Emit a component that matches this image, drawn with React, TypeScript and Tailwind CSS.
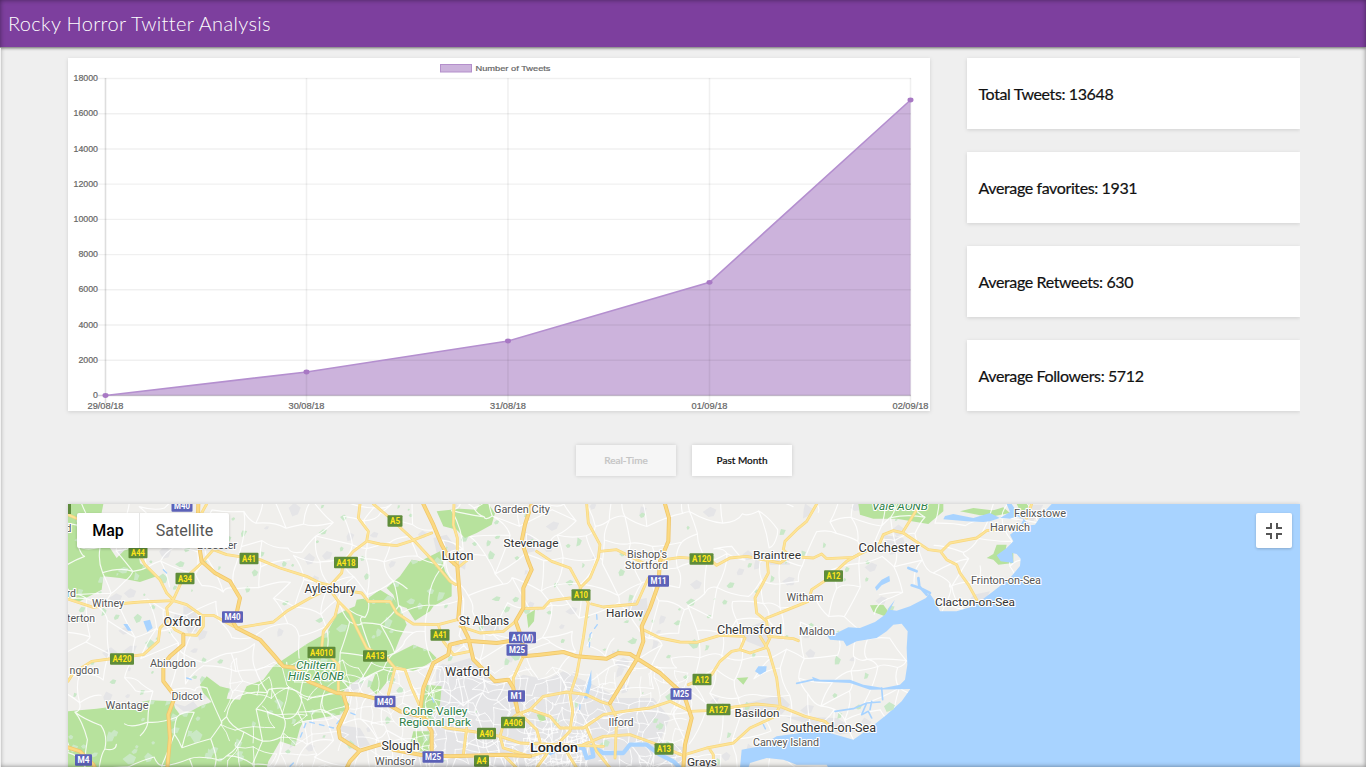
import React from "react";

const stats = ["Total Tweets: 13648", "Average favorites: 1931", "Average Retweets: 630", "Average Followers: 5712"];
const points: [string, number, number][] = [
  ["29/08/18", 105.5, 395.5],
  ["30/08/18", 306.5, 372],
  ["31/08/18", 508, 341],
  ["01/09/18", 709.5, 282.3],
  ["02/09/18", 910.5, 100],
];
const ticks = [18000, 16000, 14000, 12000, 10000, 8000, 6000, 4000, 2000, 0];

function Chart() {
  const line = points.map(([, x, y]) => `${x},${y}`).join(" ");
  return (
    <svg viewBox="68 58 862 353" className="block h-full w-full" fontFamily="'Liberation Sans', Arial, sans-serif" fontSize="8.8">
      <rect x="440.5" y="64.5" width="31" height="7.5" fill="#ccb3dc" stroke="#b48fcb" />
      <text x="475.5" y="70.7" textLength="75" lengthAdjust="spacingAndGlyphs" fontSize="8" fill="#666" stroke="#666" strokeWidth=".2">Number of Tweets</text>
      <polygon points={`105.5,395.5 ${line} 910.5,395.5`} fill="#ccb3dc" />
      {ticks.map((t, i) => {
        const y = 78.5 + i * 35.22;
        return (
          <g key={t}>
            <line x1="98" x2="911" y1={y} y2={y} stroke="#000" strokeOpacity={i === 9 ? 0.17 : 0.06} strokeWidth="1.4" />
            <text x="98" y={y + 2.6} textAnchor="end" fill="#666" stroke="#666" strokeWidth=".2">{t}</text>
          </g>
        );
      })}
      {points.map(([d, x], i) => (
        <g key={d}>
          <line x1={x} x2={x} y1="78" y2="403" stroke="#000" strokeOpacity={i === 0 ? 0.13 : 0.06} strokeWidth="1.6" />
          <text x={x} y="408.5" textAnchor="middle" textLength="36" lengthAdjust="spacingAndGlyphs" fontSize="8.4" fill="#666" stroke="#666" strokeWidth=".2">{d}</text>
        </g>
      ))}
      <polyline points={line} fill="none" stroke="#b48fcf" strokeWidth="1.6" />
      {points.map(([d, x, y]) => <ellipse key={d} cx={x} cy={y} rx="3" ry="2.4" fill="#a878c4" />)}
    </svg>
  );
}

// Deterministic mesh of local roads, as a jittered grid.
function mesh(x0: number, y0: number, x1: number, y1: number, step: number, keep: number, first: number) {
  let s = first;
  const rnd = () => {
    s = (s * 1103515245 + 12345) % 2147483648;
    return s / 2147483648;
  };
  const cols = Math.ceil((x1 - x0) / step) + 1;
  const rows = Math.ceil((y1 - y0) / step) + 1;
  const p: [number, number][][] = [];
  for (let r = 0; r < rows; r++) {
    p.push([]);
    for (let c = 0; c < cols; c++) p[r].push([x0 + (c + (rnd() - 0.5) * 0.95) * step, y0 + (r + (rnd() - 0.5) * 0.95) * step]);
  }
  let d = "";
  const edge = (a: [number, number], b: [number, number]) => {
    if (rnd() > keep) return;
    const mx = (a[0] + b[0]) / 2 + (rnd() - 0.5) * step * 0.5;
    const my = (a[1] + b[1]) / 2 + (rnd() - 0.5) * step * 0.5;
    d += `M${a[0].toFixed(1)} ${a[1].toFixed(1)}Q${mx.toFixed(1)} ${my.toFixed(1)} ${b[0].toFixed(1)} ${b[1].toFixed(1)}`;
  };
  for (let r = 0; r < rows; r++)
    for (let c = 0; c < cols; c++) {
      if (c + 1 < cols) edge(p[r][c], p[r][c + 1]);
      if (r + 1 < rows) edge(p[r][c], p[r + 1][c]);
    }
  return d;
}

function patches(n: number, x0: number, y0: number, w: number, h: number, size: number, first: number) {
  let s = first;
  const rnd = () => {
    s = (s * 1103515245 + 12345) % 2147483648;
    return s / 2147483648;
  };
  let d = "";
  for (let i = 0; i < n; i++) {
    const x = x0 + rnd() * w;
    const y = y0 + rnd() * h;
    const k = size * (0.4 + rnd());
    d += `M${x.toFixed(1)} ${y.toFixed(1)}l${(k * rnd()).toFixed(1)} ${(-k * 0.6).toFixed(1)} ${(k * 0.7).toFixed(1)} ${(k * rnd() * 0.6).toFixed(1)} ${(-k * 0.3).toFixed(1)} ${(k * 0.7).toFixed(1)} ${(-k * 0.6).toFixed(1)} ${(k * 0.3 * rnd()).toFixed(1)}Z`;
  }
  return d;
}

const motorways = [
  "M415 18L412 110 425 190 465 225 510 250 540 300 530 345 515 365 530 390 600 425 640 470 670 505 710 510 745 550 830 585 900 590 960 605 1020 640 1080 655",
  "M24 748L60 760 100 800 105 810",
  "M370 410L370 440 330 475 310 500 310 550 345 595 325 650 330 720 322 810",
  "M850 590L862 630 835 690 840 720 900 758 870 790 860 810M900 758L960 740 1000 755 1080 770 1170 775 1330 770 1410 775",
  "M1090 18L1120 80 1145 140 1170 185 1192 205 1200 300 1195 360 1225 420 1240 485 1305 550 1345 545 1360 570 1373 640",
  "M1415 18L1395 80 1385 130 1405 190 1415 215 1390 270 1390 330 1367 370 1385 420 1390 460",
  "M1115 770L1115 700 1080 640 1090 570 1120 495 1165 470 1170 440 1220 428 1310 435 1380 425M1390 475L1440 470 1510 462 1550 475 1640 482 1675 465 1710 468 1800 525 1860 580 1875 600 1895 660 1875 740 1870 810",
  "M1815 18L1827 60 1825 130 1800 190 1795 260 1770 330 1745 385 1750 430 1730 485 1690 550 1650 615",
];

const aRoads = [
  "M24 50L80 75 120 100M24 303L100 328 170 318 240 312 340 308M235 165L255 200 300 245 320 285 340 305 365 250 425 195 460 155 500 170 600 185 660 210 740 235 780 255 810 262M425 45L440 18",
  "M530 390L640 372 680 340 750 300 800 275 815 258 845 225 850 195 880 160 920 130 925 100 895 60 900 18M925 130L960 138 1010 143 1050 130 1115 105",
  "M810 275L835 310 870 345 890 390 920 450 980 480 1005 510 985 590M835 315L825 355 790 400 785 450 835 500 835 580M840 275L905 285 925 310 990 310 1010 345 1060 378 1135 380 1192 365",
  "M340 308L320 330 325 365 345 395 375 410 410 412 430 385 430 355 380 320 340 308M430 352L460 352 520 385",
  "M24 550L40 525 95 490 170 480 250 470 295 430 300 390 325 365",
  "M940 18L990 60 1060 125 1120 190 1170 250 1188 260M1182 18L1180 80 1192 120 1192 205",
  "M1580 18L1585 75 1620 140 1615 180 1590 240 1560 270 1585 315 1570 420 1550 530 1530 590 1538 640 1530 700 1490 740M1430 160L1475 190 1530 210 1560 265M1620 160L1670 155 1710 175 1760 200",
  "M1395 332L1450 330 1470 308 1530 300M1595 318L1630 327 1730 318 1765 240M1750 395L1800 420 1860 432 1910 433 1980 412 2050 415M1800 187L1860 178 1950 185 1970 202 2010 180 2060 175 2160 195 2190 175 2260 180 2285 168 2300 182 2380 178 2420 158",
  "M1135 380L1150 430 1180 470 1230 460M1005 510L1035 515 1055 570 1080 625M1200 385L1260 405 1330 400 1367 370M1195 260L1192 210 1230 180",
  "M1080 655L1160 690 1270 705 1320 715 1380 735 1490 740 1630 745M1390 475L1360 540 1360 600 1373 640M1220 690L1210 770M1320 715L1330 680 1370 650 1410 635 1450 595 1520 582 1580 590 1620 610 1650 620 1670 660 1665 780",
  "M1373 640L1430 695 1440 730M1410 635L1470 655 1500 690 1570 690 1630 650 1690 640 1770 630 1830 610 1890 640 1940 638 2090 618 2160 625 2235 655 2295 670 2310 685M1570 740L1630 715 1710 710 1780 735 1875 775M1580 690L1610 760 1650 810",
  "M1330 770L1370 810M1480 740L1430 810M1510 745L1550 810M1410 775L1460 760 1490 740M1320 715L1330 750 1410 775",
  "M1885 560L1955 530 1980 490 2015 460 2040 455 2070 465 2115 450 2130 420M2040 455L2055 420M2120 360L2170 340 2245 310 2255 275 2300 245 2360 190 2420 155 2455 145 2470 110 2500 98 2530 105 2605 155 2645 160 2670 135 2750 120 2780 98 2840 90M2530 100L2570 35M2645 165L2660 185 2690 200 2700 225 2725 260 2750 305",
  "M2270 18L2240 70 2210 95 2175 130 2170 155 2190 175M2122 190L2125 225 2085 300 2090 345 2120 370 2125 415 2200 422 2215 428M2100 415L2125 455 2150 540 2160 620M1875 770L1940 750 2020 735 2070 690 2140 658 2160 625M1950 755L1960 770 1960 810M2915 18L2900 60",
];

const greens = [
  "M24 18H130L120 70 150 150 170 180 200 150 235 165 240 195 290 235 240 252 180 240 130 235 125 275 55 312 24 305Z",
  "M24 640L110 632 200 620 270 607 340 610 345 630 360 650 395 638 420 625 455 612 430 585 420 560 440 535 480 565 508 572 500 602 540 605 560 565 610 545 640 505 745 435 800 405 830 350 850 340 885 325 890 305 925 300 960 275 1000 300 1020 330 1040 380 1020 420 1000 470 1060 440 1110 460 1130 480 1100 500 1060 520 1010 505 990 540 950 590 930 570 945 530 900 540 870 560 840 590 870 620 840 650 780 660 730 670 720 690 705 745 660 730 640 765 625 790 620 810H24Z",
  "M980 270L1020 235 1055 185 1080 190 1140 160 1155 220 1175 250 1175 295 1120 325 1110 340 1065 368 1040 330 1010 320 1000 290Z",
  "M1130 40L1200 32 1250 35 1260 18H1285L1305 45 1295 80 1250 105 1215 120 1190 95 1150 85Z",
  "M1100 560L1145 565 1140 620 1110 660 1075 650ZM1060 700L1110 700 1115 760 1070 760 1050 740Z",
  "M2395 18H2650L2650 40 2605 78 2510 62 2440 62 2400 50ZM2700 40L2740 30 2820 40 2820 50 2760 52Z",
  "M2430 322L2470 320 2488 345 2475 355 2440 342ZM2780 180L2800 168 2810 140 2840 140 2835 165 2860 165 2860 195 2815 200 2800 185ZM2790 40L2830 28 2850 45 2800 55ZM2870 18H2908L2900 35 2880 38Z",
  "M1430 650L1450 645 1458 665 1440 672ZM1400 350L1425 335 1422 370 1405 390ZM2030 540L2065 538 2050 560Z",
];

const urban = [
  "M370 325L400 330 420 370 410 400 385 405 370 375ZM345 345L370 350 365 385 340 370ZM450 595L500 590 495 655 465 655ZM340 615L375 625 400 610 420 635 370 640Z",
  "M1120 120L1160 110 1190 150 1220 180 1215 215 1180 195 1130 165ZM1395 100L1420 120 1425 160 1400 165ZM1270 385L1310 370 1320 400 1280 400ZM1705 310L1760 300 1765 350 1705 355ZM840 520L930 520 900 570 860 585ZM830 680L900 690 930 740 880 755 840 725Z",
  "M1130 510L1230 480 1330 560 1390 530 1460 545 1510 520 1600 560 1680 600 1780 600 1830 660 1800 730 1880 750 1880 810H1060L1100 700 1120 640Z",
  "M2040 400L2110 370 2140 400 2110 450 2060 430ZM2040 620L2160 590 2190 620 2160 655 2060 655ZM2170 655L2330 660 2400 700 2340 710 2250 680ZM2470 110L2530 120 2540 160 2490 170ZM2110 170L2180 165 2190 200 2130 200ZM2740 290L2790 280 2770 320 2710 330ZM2870 70L2920 20H2950L2920 70Z",
];

const sea =
  "M2975 18L2945 50 2925 80 2910 82 2890 62 2870 55 2850 62 2820 60 2790 70 2770 72 2720 70 2650 64 2655 54 2680 48 2740 60 2790 45 2820 60 2850 42 2840 18H2855L2875 48 2890 65 2878 88 2850 110 2860 130 2840 150 2810 172 2822 190 2860 195 2857 165 2870 168 2882 182 2880 204 2850 240 2800 280 2740 325 2690 340 2640 340 2622 305 2608 285 2598 300 2550 325 2510 338 2490 335 2505 305 2490 325 2475 350 2445 372 2400 390 2365 388 2330 405 2300 410 2310 425 2350 428 2360 445 2390 430 2450 420 2480 400 2500 380 2525 377 2543 400 2540 450 2542 500 2535 545 2520 560 2470 570 2410 560 2370 545 2280 545 2256 536 2262 550 2370 555 2430 575 2551 573 2525 610 2480 650 2430 690 2380 725 2310 705 2260 700 2150 715 2100 745 2045 755 2040 810H2065L2070 795 2120 780 2170 785 2210 800 2300 800 2305 810H3730V18Z";

type Label = [string, number, number, number, number, string?];
const dark = "#333";
const town = "#555";
const park = "#2f8148";
const labels: Label[] = [
  ["Garden City", 522, 513, 56, 10.5, town], ["Stevenage", 531, 547, 55, 11.5, dark], ["Luton", 457.5, 560, 32, 12, dark],
  ["Bishop's", 647, 558, 40, 10.5, town], ["Stortford", 646.5, 568.5, 43, 10.5, town], ["Braintree", 777, 559, 48, 11.5, dark],
  ["Colchester", 889, 551.5, 61, 12, dark], ["Felixstowe", 1040, 516.5, 52, 10.5, town], ["Harwich", 1010, 530.5, 40, 10.5, town],
  ["Frinton-on-Sea", 1006, 584, 70, 10.5, town], ["Clacton-on-Sea", 975, 605.5, 80, 11.5, dark], ["Witham", 805, 601, 37, 10.5, town],
  ["Chelmsford", 749.5, 634, 65, 12.5, dark], ["Maldon", 817, 635, 36, 10.5, town], ["Harlow", 624.5, 617, 37, 11.5, dark],
  ["St Albans", 484, 625, 50, 12, dark], ["Watford", 467.5, 675.5, 45, 12.5, dark], ["Aylesbury", 330, 592.5, 51, 12, dark],
  ["Oxford", 182.5, 625.5, 38, 12.5, dark], ["Witney", 108, 607, 32, 10.5, town], ["Abingdon", 173, 667, 46, 10.5, town],
  ["Didcot", 187, 699.5, 31, 10.5, town], ["Wantage", 127, 709, 43, 10.5, town], ["Bicester", 217, 548.5, 40, 10.5, town],
  ["Ilford", 621, 725.5, 25, 10.5, town], ["Basildon", 757, 716.5, 45, 11.5, dark], ["Southend-on-Sea", 828.5, 732, 95, 12, dark],
  ["Canvey Island", 786, 746, 66, 10.5, town], ["Grays", 702, 766, 30, 11, dark], ["Slough", 400.5, 750, 38, 12, dark],
  ["Windsor", 395, 764.5, 40, 10.5, town], ["Colne Valley", 435, 714.5, 65, 11, park], ["Regional Park", 435, 725.5, 72, 11, park],
];

type Shield = [string, number, number, number];
const shields: Shield[] = [
  ["M40", 182, 506, 21], ["A5", 395, 521, 15], ["A44", 138, 552.5, 19], ["A41", 249, 558.5, 19], ["A418", 346, 562.5, 24],
  ["A34", 185, 578.5, 19], ["M40", 232.5, 617, 21], ["A10", 581, 595, 19], ["M11", 658.5, 581, 21], ["A120", 701.5, 559, 24],
  ["A12", 833.5, 576, 19], ["A41", 440, 635, 19], ["A1(M)", 522.5, 637.5, 27], ["M25", 517, 650, 21], ["A413", 375, 656, 24],
  ["A4010", 321.5, 652.5, 28], ["A420", 122, 659, 24], ["M40", 385, 701.5, 21], ["M1", 516.5, 696, 17], ["A406", 513, 722.5, 24],
  ["A40", 486.5, 733.5, 19], ["M25", 433, 757, 21], ["A4", 481.5, 761, 15], ["A13", 664, 749, 19], ["M25", 681, 694, 21],
  ["A12", 702, 679.5, 19], ["A127", 718.5, 709.5, 24], ["M4", 83.5, 760, 17],
];

function MapCanvas() {
  return (
    <svg viewBox="68 504 1232 263" className="block h-full w-full" fontFamily="Roboto, sans-serif">
      <defs>
        <clipPath id="woods">{greens.map((d, i) => <path key={i} d={d} />)}</clipPath>
      </defs>
      <rect x="68" y="504" width="1232" height="263" fill="#f0efec" />
      <g transform="translate(60 498) scale(.333333)" fill="none" strokeLinejoin="round" strokeLinecap="round">
        <g fill="#e4e4e6">{urban.map((d, i) => <path key={i} d={d} />)}</g>
        <path d={patches(110, 24, 20, 2500, 780, 22, 91)} fill="#e5e5e7" />
        <path d={patches(190, 24, 20, 2500, 780, 15, 7)} fill="#c9e8c8" />
        <g fill="#b7e29d">{greens.map((d, i) => <path key={i} d={d} />)}</g>
        <path d={patches(230, 24, 20, 1150, 780, 20, 33)} fill="#cae8c5" clipPath="url(#woods)" />
        <path d={mesh(0, 0, 2900, 810, 66, 0.72, 17)} stroke="#fff" strokeOpacity=".85" strokeWidth="3.5" />
        <path d={mesh(1100, 520, 1860, 810, 30, 0.7, 5)} stroke="#fff" strokeOpacity=".8" strokeWidth="3" />
        <path d={mesh(1400, 690, 1580, 810, 15, 0.8, 50)} stroke="#fff" strokeWidth="2.5" />
        <path d={mesh(500, 500, 1080, 810, 44, 0.7, 23)} stroke="#fff" strokeOpacity=".8" strokeWidth="3" />
        <g fill="#a8d3ff">
          <path d={sea} />
          <path d="M2445 268L2465 245 2488 233 2490 250 2465 262 2450 278ZM2085 520L2095 505 2120 505 2118 520 2100 530ZM1594 515L1585 550 1572 600 1582 602 1594 560ZM250 370L270 365 278 390 262 402ZM190 378L202 378 215 398 204 398Z" />
        </g>
        <g stroke="#a8d3ff" strokeWidth="8">
          <path d="M1470 765L1520 745 1570 750 1580 780 1600 775 1595 745 1630 765 1690 765 1710 740 1760 740 1800 770 1840 790 1860 810" strokeWidth="13" />
          <path d="M2600 290L2578 265 2575 240M2610 285L2580 270 2555 262M2545 210L2570 220" />
          <path d="M2325 640L2380 632 2420 615 2460 612M2420 615L2405 650 2425 640 2435 660M2430 635L2435 610M2210 556L2260 545M2465 570L2468 605" strokeWidth="5" />
          <path d="M1610 350L1612 380 1590 410 1588 450M1560 620L1558 645M885 650L860 640 820 690 740 670 720 720M310 215L330 235M380 540L395 545M700 795L690 805M1116 600L1125 620M2110 680L2120 700" strokeWidth="4" strokeDasharray="14 16" />
        </g>
        <path d="M2472 625L2488 612 2505 622 2500 635 2480 642Z" fill="#c9e8c8" />
        <g stroke="#f8d77e" strokeWidth="8.5">{aRoads.map((d, i) => <path key={i} d={d} />)}</g>
        <g stroke="#fde498" strokeWidth="5">{aRoads.map((d, i) => <path key={i} d={d} />)}</g>
        <g stroke="#efc66c" strokeWidth="12">{motorways.map((d, i) => <path key={i} d={d} />)}</g>
        <g stroke="#fbd981" strokeWidth="7.5">{motorways.map((d, i) => <path key={i} d={d} />)}</g>
      </g>
      <g stroke="#fff" strokeWidth="2.2" strokeLinejoin="round" className="[paint-order:stroke]">
        {labels.map(([t, x, y, w, size, fill]) => (
          <text key={t} x={x - w / 2} y={y} textLength={w} lengthAdjust="spacingAndGlyphs" fontSize={size} fill={fill}>{t}</text>
        ))}
        <text x="530" y="752" textLength="48" lengthAdjust="spacingAndGlyphs" fontSize="13" fontWeight="500" fill="#222">London</text>
        <g fontSize="11" fontStyle="italic" fill={park}>
          <text x="296" y="668.5" textLength="40" lengthAdjust="spacingAndGlyphs">Chiltern</text>
          <text x="288" y="680" textLength="56" lengthAdjust="spacingAndGlyphs">Hills AONB</text>
          <text x="872" y="510" textLength="56" lengthAdjust="spacingAndGlyphs">Vale AONB</text>
        </g>
        <g fontSize="10.5" fill={town}>
          <text x="76" y="597" textAnchor="end">rd</text>
          <text x="95" y="621.5" textAnchor="end">terton</text>
          <text x="99" y="673.5" textAnchor="end">ngdon</text>
          <text x="71.5" y="532" textAnchor="end">d</text>
        </g>
      </g>
      <rect x="66" y="504" width="5" height="10" fill="#5d8a3c" />
      {shields.map(([t, x, y, w], i) => {
        const green = t[0] === "A" && t !== "A1(M)";
        return (
          <g key={i}>
            <rect x={x - w / 2} y={y - 5.8} width={w} height="11.6" rx="1" fill={green ? "#5f8c3a" : "#5c62b8"} />
            <text x={x} y={y + 3.1} textAnchor="middle" textLength={w - 5} lengthAdjust="spacingAndGlyphs" fontSize="8.7" fontWeight="700" fill={green ? "#ffe61c" : "#fff"}>{t}</text>
          </g>
        );
      })}
    </svg>
  );
}

export default function App() {
  return (
    <div className="relative flex h-[767px] w-full flex-col overflow-hidden bg-[#efefef] font-[Lato,sans-serif] text-[#111]">
      <header className="z-10 flex h-[47px] shrink-0 items-start bg-[#7d3f9e] pl-2 shadow-[0_1px_3px_rgba(0,0,0,0.6)]">
        <h1 className="text-[20px] leading-[47px] font-light tracking-[0.33px] text-white">Rocky Horror Twitter Analysis</h1>
      </header>
      <main className="flex w-[1300px] grow flex-col pt-[11px] pl-[68px]">
        <section className="flex h-[353px] shrink-0 justify-between">
          <div className="h-[353px] w-[862px] bg-white shadow-[0_1px_4px_rgba(0,0,0,0.13)]">
            <Chart />
          </div>
          <div className="-my-[6px] -ml-[6px] flex w-[339px] flex-col justify-between overflow-hidden py-[6px] pl-[6px]">
            {stats.map((s) => (
              <div key={s} className="flex h-[71px] items-center bg-white pl-[11.5px] text-[16px] tracking-[-0.38px] shadow-[0_1px_4px_rgba(0,0,0,0.13)] [-webkit-text-stroke:0.2px_#111]">{s}</div>
            ))}
          </div>
        </section>
        <div className="mt-[34px] flex h-[31px] shrink-0 justify-center gap-[16px] text-[10px]">
          <button className="h-[31px] w-[100px] bg-[#f6f6f6] font-medium text-[#c4c4c4] shadow-[0_0_4px_rgba(0,0,0,0.15)] [-webkit-text-stroke:0.2px_#c4c4c4]">Real-Time</button>
          <button className="h-[31px] w-[100px] bg-white font-medium shadow-[0_0_4px_rgba(0,0,0,0.15)] [-webkit-text-stroke:0.2px_#111]">Past Month</button>
        </div>
        <section className="relative mt-[28px] h-[263px] w-[1232px] shrink-0 shadow-[0_0_4px_rgba(0,0,0,0.15)]">
          <MapCanvas />
          <div className="absolute top-[9px] left-[9px] flex h-[35px] rounded-xs bg-white font-[Roboto,sans-serif] text-[16px] shadow-[0_1px_3px_rgba(0,0,0,0.2)]">
            <button className="w-[63px] border-r border-[#e6e6e6] font-medium text-black">Map</button>
            <button className="w-[89px] text-[#565656]">Satellite</button>
          </div>
          <button className="absolute top-[9px] right-[8px] flex h-[35px] w-9 items-center justify-center rounded-xs bg-white shadow-[0_1px_3px_rgba(0,0,0,0.2)]">
            <svg width="16" height="16" viewBox="0 0 16 16" fill="none" stroke="#555" strokeWidth="2">
              <path d="M0 5H5V0M16 5H11V0M0 11H5V16M16 11H11V16" />
            </svg>
          </button>
        </section>
      </main>
      <div className="pointer-events-none absolute inset-0 z-20 shadow-[inset_0_0_5px_rgba(0,0,0,0.45)]" />
      <div className="pointer-events-none absolute top-[48px] bottom-0 left-0 z-20 w-px bg-white/80" />
    </div>
  );
}
